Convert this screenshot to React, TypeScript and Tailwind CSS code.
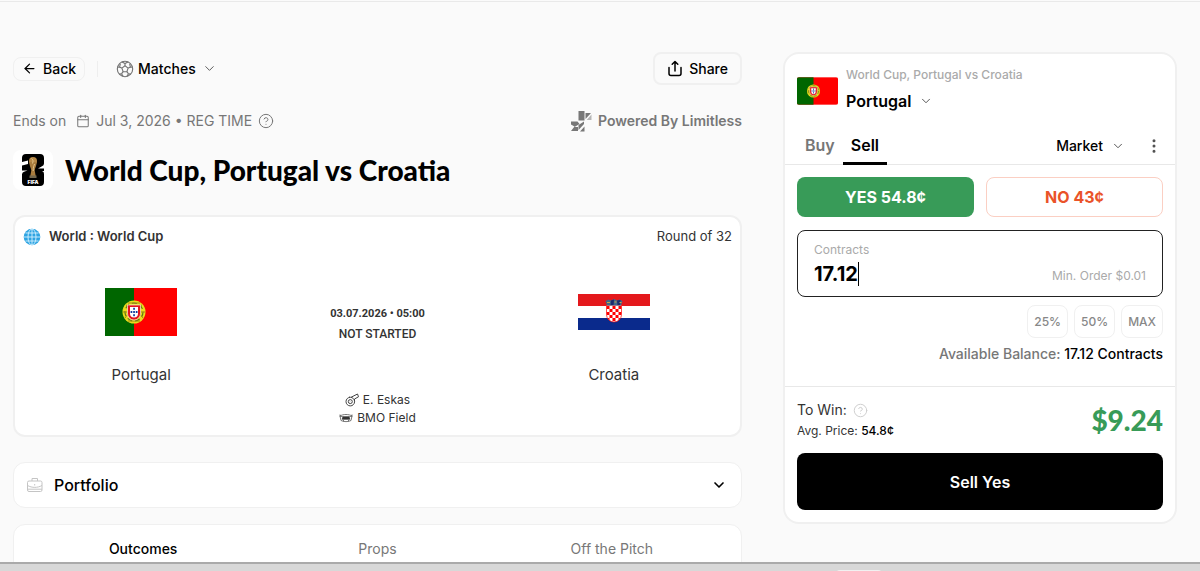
import { useState } from 'react';
import { ArrowLeft, Calendar, ChevronDown, CircleHelp, EllipsisVertical } from 'lucide-react';

const tabs = ['Outcomes', 'Props', 'Off the Pitch'];

const presets = [
  { label: '25%', share: 0.25 },
  { label: '50%', share: 0.5 },
  { label: 'MAX', share: 1 },
];

const BALANCE = 17.12;

function PortugalFlag({ className }: { className: string }) {
  return (
    <svg viewBox="0 0 72 48" className={className} aria-label="Portugal flag">
      <rect width="72" height="48" fill="#f00" />
      <rect width="29" height="48" fill="#060" />
      <circle cx="29" cy="24" r="11.5" fill="#e8dc1c" />
      <circle cx="29" cy="24" r="9" fill="none" stroke="#5c7a10" strokeWidth="1.2" strokeDasharray="5 3" />
      <path d="M18 24h22M21 17c5 2 13 7 17 13M37 17c-5 2-13 7-17 13M23 15h12M23 33h12" stroke="#a08a12" strokeWidth="1" fill="none" />
      <path d="M22.5 17h13v8.500a6.500 6.500 0 0 1-13 0z" fill="#e3131b" stroke="#fff" strokeWidth="0.6" />
      <path d="M25 19h8v6.500a4 4 0 0 1-8 0z" fill="#fff" />
      <g fill="#123a9c">
        <rect x="28.200" y="19.800" width="1.700" height="2" />
        <rect x="28.200" y="23" width="1.700" height="2" />
        <rect x="28.200" y="26.200" width="1.700" height="2" />
        <rect x="25.600" y="23" width="1.700" height="2" />
        <rect x="30.800" y="23" width="1.700" height="2" />
      </g>
    </svg>
  );
}

function CroatiaFlag({ className }: { className: string }) {
  const squares = [];
  for (let r = 0; r < 5; r++) {
    for (let c = 0; c < 5; c++) {
      if ((r + c) % 2 === 0) squares.push(<rect key={`${r}-${c}`} x={28.5 + c * 3} y={12 + r * 3} width="3" height="3" fill="#f00" />);
    }
  }
  return (
    <svg viewBox="0 0 72 36" className={className} aria-label="Croatia flag">
      <rect width="72" height="12" fill="#e4181c" />
      <rect y="12" width="72" height="12" fill="#fff" />
      <rect y="24" width="72" height="12" fill="#0a2a8c" />
      <clipPath id="hr-shield">
        <path d="M28.500 11.500h15v9a7.500 7.500 0 0 1-15 0z" />
      </clipPath>
      <g clipPath="url(#hr-shield)">
        <rect x="28" y="11" width="16" height="18" fill="#fff" />
        {squares}
      </g>
      <path d="M28.500 11.500v9a7.500 7.500 0 0 0 15 0v-9" fill="none" stroke="#f00" strokeWidth="0.7" />
      <path d="M27.500 7l3-1.500 2.500 1 3-1.500 3 1.500 2.500-1 3 1.500-1.500 4.500h-14z" fill="#42688a" />
      <path d="M33 6.500l-.4 4.500h3l.4-5.500zM39 6.500l.4 4.500h2.600l.5-5z" fill="#1c2d6e" />
      <path d="M29 8.500h3M36.500 8h2M41.500 8.500h2" stroke="#c9a548" strokeWidth="1" />
    </svg>
  );
}

function BallIcon() {
  return (
    <svg viewBox="0 0 18 18" className="size-[18px] text-neutral-500" fill="none" stroke="currentColor" strokeWidth="1.1" strokeLinejoin="round">
      <circle cx="9" cy="9" r="7.700" />
      <path d="M9 5.800l3.100 2.300-1.200 3.600H7.100L5.900 8.100z" />
      <path d="M9 5.800V3.500M12.100 8.100l2.300-.8M10.900 11.700l1.500 2M7.100 11.700l-1.500 2M5.900 8.100l-2.300-.8" />
      <path d="M6 1.900l3 1.600 3-1.600M16.500 7l-2.100.3-.7-3.500M14.800 14l-2.400-.3-1.500 2.700M3.200 14l2.400-.3 1.500 2.700M1.500 7l2.100.3.7-3.500" />
    </svg>
  );
}

function ShareIcon() {
  return (
    <svg viewBox="0 0 16 18" className="h-[18px] w-4" fill="none" stroke="currentColor" strokeWidth="1.500" strokeLinecap="round" strokeLinejoin="round">
      <path d="M8 11V2M5.200 4.300L8 1.500l2.800 2.800" />
      <path d="M2 7.500v6A2 2 0 0 0 4 15.500h8a2 2 0 0 0 2-2v-6" />
    </svg>
  );
}

function LimitlessLogo() {
  return (
    <svg viewBox="0 0 21 22" className="h-[22px] w-[21px]" fill="#777">
      <rect x="7.500" y="1" width="6" height="9.500" />
      <path d="M14.500 3H20l-5.500 6z" />
      <path d="M20.500 4.500V10h-4.800z" fill="#b5b5b5" />
      <path d="M0 11.500h6.500l2 2.500L3.500 17H7v4H0l3.500-4.500L0 14.500z" />
      <path d="M7.500 15l5.500-3.500V14l-5.500 6zM9 21.500l4.500-5v5z" />
    </svg>
  );
}

function WorldCupLogo() {
  return (
    <svg viewBox="0 0 40 40" className="size-10 shrink-0 rounded-lg bg-white">
      <path d="M13 4h14a4 4 0 0 1 4 4v5.500a3 3 0 0 1-2 2.800L25 18.500h6V21h-2a3 3 0 0 1 2 3v8a4 4 0 0 1-4 4H13a4 4 0 0 1-4-4v-7.500a3 3 0 0 1 2-2.800l3.500-1.200H9v-5l6-1.500V10.500L9 12V8a4 4 0 0 1 4-4z" fill="#000" />
      <ellipse cx="20" cy="11" rx="4" ry="4" fill="#b88a48" />
      <path d="M16.300 12c0 4 1.700 5.500 2 8.500l-1.300 7h6l-1.300-7c.3-3 2-4.500 2-8.500z" fill="#a87c3e" />
      <path d="M18.500 8.500c1.500 1 2 2.500 1 5M21.500 14c-.5 2-1.500 3-1.300 7" stroke="#e9cd95" strokeWidth="0.900" fill="none" />
      <path d="M16.500 25.500h7v2.500h-7z" fill="#73684e" />
      <text x="20" y="34.200" textAnchor="middle" fontSize="5" fontWeight="900" fontFamily="Inter, sans-serif" fill="#fff">FIFA</text>
    </svg>
  );
}

function GlobeIcon() {
  return (
    <svg viewBox="0 0 18 18" className="size-[18px]">
      <circle cx="9" cy="9" r="8.300" fill="#2ea4e2" />
      <g fill="none" stroke="#d3f1ff" strokeWidth="0.900">
        <ellipse cx="9" cy="9" rx="4" ry="8" />
        <path d="M9 1v16M1 9h16M2.500 5h13M2.500 13h13" />
      </g>
    </svg>
  );
}

function WhistleIcon() {
  return (
    <svg viewBox="0 0 14 14" className="size-3.5" fill="none" stroke="#444" strokeWidth="1" strokeLinejoin="round">
      <circle cx="5.300" cy="8.600" r="4.300" />
      <circle cx="5.300" cy="8.600" r="2" />
      <path d="M4 4.500l1-.8M6 4.300L12.500 1l1 2.800-4 2.200v2.600M5.300 8.600v.2" />
    </svg>
  );
}

function StadiumIcon() {
  return (
    <svg viewBox="0 0 14 12" className="h-3 w-3.5" fill="none" stroke="#555" strokeWidth="0.800">
      <path d="M1 4c3-2 9-2 12 0l-1 4.500c-3 1.500-7 1.500-10 0z" />
      <path d="M4 4.800h6l.8 2.400H3.200z" fill="#333" stroke="#333" />
      <path d="M1 4l3 .8M13 4l-3 .8M4.500 9.500V8M9.500 9.500V8M1 2.500v2M13 2.500v2" />
    </svg>
  );
}

function BriefcaseIcon() {
  return (
    <svg viewBox="0 0 18 18" className="size-[18px]" fill="none" stroke="#c4c4c4" strokeWidth="1" strokeLinejoin="round">
      <rect x="1.500" y="5" width="14.500" height="10.500" rx="1.500" />
      <path d="M6 5V2.500h5.500V5M1.500 9.500c4.500 2.500 10 2.500 14.500 0M8.700 8v1.500M1.500 13.200H16" />
    </svg>
  );
}

function MatchCard() {
  return (
    <section className="mt-[25px] rounded-xl border-2 border-[#f0f0f0] bg-white p-2 text-[#333]">
      <div className="flex h-6 items-center justify-between text-[13px]">
        <h2 className="flex items-center gap-2 font-semibold">
          <GlobeIcon />
          World : World Cup
        </h2>
        <span>Round of 32</span>
      </div>
      <div className="mt-[27px] grid grid-cols-3 text-center">
        <div className="flex flex-col items-center">
          <div className="flex h-[71px] items-center">
            <PortugalFlag className="h-12 w-[72px]" />
          </div>
          <p className="mt-4 text-[15px] leading-6">Portugal</p>
        </div>
        <div className="flex flex-col items-center pt-7">
          <p className="font-['Roboto',sans-serif] text-[11px] leading-5 font-bold">03.07.2026 • 05:00</p>
          <p className="font-['Roboto',sans-serif] text-xs leading-5 font-medium">NOT STARTED</p>
          <p className="mt-[47px] flex items-center gap-1 text-xs leading-[18px]">
            <WhistleIcon /> E. Eskas
          </p>
          <p className="flex items-center gap-1 text-xs leading-[18px]">
            <StadiumIcon /> BMO Field
          </p>
        </div>
        <div className="flex flex-col items-center">
          <div className="flex h-[71px] items-center">
            <CroatiaFlag className="h-9 w-[72px]" />
          </div>
          <p className="mt-4 text-[15px] leading-6">Croatia</p>
        </div>
      </div>
    </section>
  );
}

function TradePanel() {
  const [amount, setAmount] = useState('17.12');
  const [side, setSide] = useState('Sell');

  return (
    <aside className="mt-2 self-start rounded-2xl border-2 border-[#f0f0f0] bg-white">
      <div className="flex items-center gap-2 px-3 pt-[11px]">
        <PortugalFlag className="h-7 w-[41px] rounded-xs" />
        <div>
          <p className="text-xs leading-5 font-medium text-[#aaa]">World Cup, Portugal vs Croatia</p>
          <button className="flex items-center gap-2 text-base leading-8 font-semibold">
            Portugal
            <ChevronDown size={14} strokeWidth={1.5} className="text-neutral-700" />
          </button>
        </div>
      </div>

      <div className="mt-3 flex items-end justify-between border-b border-[#e8e8e8] px-3">
        <div className="flex">
          {['Buy', 'Sell'].map((s) => (
            <button
              key={s}
              onClick={() => setSide(s)}
              className={side === s ? '-mb-px border-b-3 border-black px-2 pb-px text-base leading-8 font-semibold' : '-mb-px border-b-3 border-transparent px-2 pb-px text-base leading-8 font-semibold text-[#777]'}
            >
              {s}
            </button>
          ))}
        </div>
        <div className="flex items-center gap-5 pb-1.5">
          <button className="flex items-center gap-2 text-sm leading-6 font-medium">
            Market
            <ChevronDown size={14} strokeWidth={1.5} className="text-neutral-700" />
          </button>
          <button aria-label="More options">
            <EllipsisVertical size={18} strokeWidth={2} className="text-neutral-600" />
          </button>
        </div>
      </div>

      <div className="px-3 pt-3">
        <div className="grid grid-cols-2 gap-3">
          <button className="h-10 rounded-lg bg-[#389b58] text-base font-bold text-white">YES 54.8¢</button>
          <button className="h-10 rounded-lg border border-[#fbcfc3] text-base font-bold text-[#ea5328]">NO 43¢</button>
        </div>

        <label className="mt-[13px] flex h-[67px] items-end justify-between rounded-lg border border-[#222] px-4 pb-2">
          <span>
            <span className="block text-xs leading-5 text-[#aaa]">Contracts</span>
            <span className="flex items-center">
              <input
                value={amount}
                onChange={(e) => setAmount(e.target.value)}
                className="field-sizing-content text-xl leading-7 font-bold caret-transparent outline-none"
              />
              <span className="h-6 w-px bg-black"></span>
            </span>
          </span>
          <span className="text-xs leading-6 text-[#aaa]">Min. Order $0.01</span>
        </label>

        <div className="mt-2 flex justify-end gap-1.5">
          {presets.map((p) => (
            <button
              key={p.label}
              onClick={() => setAmount((BALANCE * p.share).toFixed(2))}
              className="h-[33px] rounded-lg border border-[#f0f0f0] px-1.5 text-xs font-medium text-[#888]"
            >
              {p.label}
            </button>
          ))}
        </div>
        <p className="mt-1 text-right text-sm leading-6 font-medium text-[#777]">
          Available Balance: <span className="text-black">{BALANCE} Contracts</span>
        </p>
      </div>

      <div className="mt-5 border-t border-[#e8e8e8] p-3">
        <div className="flex items-center justify-between">
          <div className="text-[#333]">
            <p className="flex items-center gap-1.5 text-sm leading-[22px]">
              To Win:
              <CircleHelp size={15} strokeWidth={1.5} className="text-[#ccc]" />
            </p>
            <p className="text-xs leading-5">
              Avg. Price: <span className="font-medium text-black">54.8¢</span>
            </p>
          </div>
          <p className="font-['Lato',sans-serif] text-[28px] leading-10 font-black text-[#389b58]">$9.24</p>
        </div>
        <button className="mt-3 h-[57px] w-full rounded-lg bg-black text-base font-semibold text-white">Sell Yes</button>
      </div>
    </aside>
  );
}

export default function App() {
  const [activeTab, setActiveTab] = useState('Outcomes');

  return (
    <div className="flex h-screen flex-col overflow-hidden bg-[#fafafa] font-['Inter',sans-serif] text-black">
      <div className="h-0.5 shrink-0 border-b border-[#e9e9e9]"></div>

      <div className="grid min-h-0 flex-1 grid-cols-[minmax(0,1fr)_394px] gap-[41px] overflow-hidden pt-[42px] pr-[23px] pl-[13px]">
        <main className="pt-2">
          <div className="flex items-center justify-between">
            <div className="flex items-center">
              <button className="flex h-6 items-center gap-1.5 rounded-lg border border-[#f0f0f0] px-2 text-sm font-medium">
                <ArrowLeft size={15} />
                Back
              </button>
              <div className="mx-3 h-4 w-px bg-[#eeeeee]"></div>
              <button className="flex items-center gap-1 px-1.5 text-sm font-medium">
                <BallIcon />
                Matches
                <ChevronDown size={15} strokeWidth={1.5} className="ml-0.5 text-neutral-600" />
              </button>
            </div>
            <button className="flex h-[33px] items-center gap-1.5 rounded-lg border-2 border-[#f0f0f0] px-3 text-sm font-medium">
              <ShareIcon />
              Share
            </button>
          </div>

          <div className="mt-6 flex h-6 items-center justify-between text-sm text-[#777]">
            <div className="flex items-center gap-1.5">
              <span className="mr-1">Ends on</span>
              <Calendar size={14} strokeWidth={1.75} />
              <span>Jul 3, 2026 • REG TIME</span>
              <CircleHelp size={16} strokeWidth={1.5} />
            </div>
            <a href="#limitless" className="flex items-center gap-1.5 font-semibold">
              <LimitlessLogo />
              Powered By Limitless
            </a>
          </div>

          <div className="mt-[17px] flex items-center gap-3">
            <WorldCupLogo />
            <h1 className="font-['Lato',sans-serif] text-[28px] leading-9 font-black">World Cup, Portugal vs Croatia</h1>
          </div>

          <MatchCard />

          <button className="mt-[25px] flex h-[46px] w-full items-center gap-2.5 rounded-xl border border-[#f0f0f0] bg-white px-3 text-base font-medium">
            <BriefcaseIcon />
            Portfolio
            <ChevronDown size={16} strokeWidth={2.5} className="mr-0.5 ml-auto" />
          </button>

          <div className="mt-4 grid grid-cols-3 rounded-xl border border-[#f0f0f0] bg-white px-3 pt-3 pb-6">
            {tabs.map((tab) => (
              <button
                key={tab}
                onClick={() => setActiveTab(tab)}
                className={activeTab === tab ? 'text-sm leading-6 font-medium' : 'text-sm leading-6 text-[#777]'}
              >
                {tab}
              </button>
            ))}
          </div>
        </main>

        <TradePanel />
      </div>

      <div className="flex h-[9px] shrink-0 justify-center overflow-hidden border-t-2 border-[#aaa] bg-[#d8d8d8] pt-1.5">
        <div className="ml-[518px] h-4 w-[46px] rounded-sm bg-[#f1f1f1]"></div>
      </div>
    </div>
  );
}
